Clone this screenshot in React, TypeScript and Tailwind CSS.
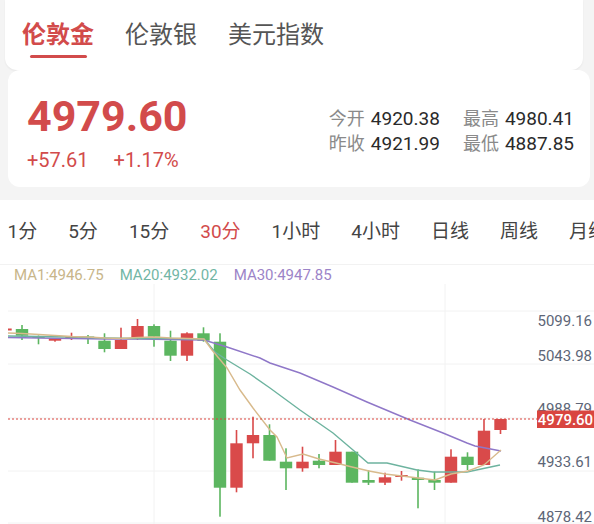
import React from 'react';

const RED = '#d94a4a';
const GREEN = '#5cb660';

// [index, color, bodyTop, bodyBottom, wickTop, wickBottom]
type Candle = [number, 'r' | 'g', number, number, number, number];

const candles: Candle[] = [
  [0, 'r', 328.5, 330.5, 328.5, 330.5],
  [1, 'g', 329, 335.7, 325, 340],
  [2, 'g', 336, 337.5, 335.5, 344.3],
  [3, 'r', 338.3, 340.7, 338.3, 341.7],
  [4, 'r', 336.7, 338.3, 332.7, 340],
  [5, 'g', 336.5, 338, 335, 344],
  [6, 'g', 340.7, 349, 333.3, 352.3],
  [7, 'r', 340, 349, 327.7, 349],
  [8, 'r', 326, 337.7, 319, 340],
  [9, 'g', 326, 336.7, 324.3, 346.7],
  [10, 'g', 340.7, 355.7, 330.7, 361],
  [11, 'r', 333.3, 355.7, 332.3, 361],
  [12, 'g', 333.3, 340.7, 327.3, 341.7],
  [13, 'g', 341.7, 487.7, 333.3, 516.7],
  [14, 'r', 443.3, 487.7, 430, 492.3],
  [15, 'r', 435, 443.3, 416.7, 458.3],
  [16, 'g', 435, 460.7, 424.3, 460.7],
  [17, 'g', 461.7, 468.3, 448.3, 490],
  [18, 'r', 461.7, 468.3, 446.7, 471.7],
  [19, 'g', 460.7, 465, 454, 468.3],
  [20, 'r', 451.7, 465, 440, 465],
  [21, 'g', 451.7, 482.7, 451.7, 482.7],
  [22, 'g', 480, 482.7, 470, 485],
  [23, 'r', 477.3, 482.7, 472.7, 485],
  [24, 'r', 475, 476.7, 471, 480.7],
  [25, 'g', 477.7, 480, 469.3, 508.3],
  [26, 'g', 480, 482.7, 471.7, 490],
  [27, 'r', 456.7, 482.7, 449.3, 482.7],
  [28, 'g', 456.7, 465, 452.3, 470],
  [29, 'r', 430.7, 465, 419, 465],
  [30, 'r', 419, 430, 419, 434],
];

const ma1 =
  '8,333 22,333.5 39,334.5 55,335.5 72,336.5 88,337 105,338 121,338.5 138,337.5 154,337 171,338 187,338.5 204,339 212,350 227,368 240,390 253,408 270,430 277,437 287,458 303,454 319,459 336,463 352,467 369,471 385,474 402,476 418,478 435,480 451,474 468,471 484,465 501,450';
const ma20 =
  '8,336 39,336.5 72,337 105,338 138,338.5 171,338.5 204,339 215,352 227,360 250,374 270,388 300,410 333,433 353,450 368,463 387,463 417,470 433,472 467,472 500,465';
const ma30 =
  '8,337.5 39,338 72,338.5 105,339 138,339 171,339.5 204,340 227,347 260,358 270,363 300,373 333,387 367,402 410,420 443,433 467,443 475,446 501,451';

const axis: [string, number][] = [
  ['5099.16', 325.5],
  ['5043.98', 360.5],
  ['4988.79', 413.5],
  ['4933.61', 467],
  ['4878.42', 522],
];

function Chart() {
  return (
    <svg width={594} height={240} viewBox="0 284 594 240" className="block">
      <defs>
        <clipPath id="plot">
          <rect x={8} y={284} width={586} height={240} />
        </clipPath>
      </defs>
      {[311, 364, 418, 471, 523].map((y) => (
        <line key={y} x1={8} x2={594} y1={y} y2={y} stroke="#f2f2f2" strokeWidth={1} />
      ))}
      {[154, 445].map((x) => (
        <line key={x} x1={x} x2={x} y1={284} y2={524} stroke="#f2f2f2" strokeWidth={1} />
      ))}
      <g clipPath="url(#plot)">
        {candles.map(([i, c, bt, bb, wt, wb]) => {
          const x = 5.5 + 16.5 * i;
          const fill = c === 'r' ? RED : GREEN;
          return (
            <g key={i}>
              <rect x={x - 0.8} y={wt} width={1.6} height={wb - wt} fill={fill} />
              <rect x={x - 6.2} y={bt} width={12.4} height={Math.max(bb - bt, 2)} fill={fill} />
            </g>
          );
        })}
        <polyline points={ma30} fill="none" stroke="#8f77c8" strokeWidth={1.4} />
        <polyline points={ma20} fill="none" stroke="#6db39f" strokeWidth={1.4} />
        <polyline points={ma1} fill="none" stroke="#d8ba8c" strokeWidth={1.4} />
      </g>
      <line x1={8} x2={537} y1={419} y2={419} stroke="#d9453f" strokeWidth={1.2} strokeDasharray="2 2" />
      {axis.map(([t, y]) => (
        <text key={t} x={592} y={y} textAnchor="end" fontSize={15} fill="#5d6677">
          {t}
        </text>
      ))}
      <rect x={537} y={410.5} width={57} height={17.5} fill="#d9453f" />
      <text x={565.5} y={424.5} textAnchor="middle" fontSize={15} fontWeight={500} fill="#ffffff">
        4979.60
      </text>
    </svg>
  );
}

const periods = ['1分', '5分', '15分', '30分', '1小时', '4小时', '日线', '周线', '月线'];

const stats: [string, string][] = [
  ['今开', '4920.38'],
  ['最高', '4980.41'],
  ['昨收', '4921.99'],
  ['最低', '4887.85'],
];

export default function App() {
  return (
    <div className="w-[594px] h-[524px] overflow-hidden bg-[#f4f4f4] font-[Roboto,'Noto_Sans_CJK_SC',sans-serif]">
      {/* market tabs */}
      <div className="ml-[5px] w-[578px] h-[70px] bg-white rounded-b-xl shadow-[0_1px_2px_rgba(0,0,0,0.06)] flex gap-[31px] pl-[17px] pt-[19px]">
        <div className="flex flex-col items-center">
          <span className="text-[24px] leading-[32px] font-bold text-[#d24b4b]">伦敦金</span>
          <span className="mt-[4px] w-[57px] h-[3px] rounded-full bg-[#d24b4b]" />
        </div>
        <span className="text-[24px] leading-[32px] text-[#555555]">伦敦银</span>
        <span className="text-[24px] leading-[32px] text-[#555555]">美元指数</span>
      </div>

      {/* quote card */}
      <div className="ml-[8px] w-[582px] h-[117px] bg-white rounded-xl flex justify-between pl-[19px] pr-[16px]">
        <div className="pt-[25px] text-[#d24b4b]">
          <div className="text-[43px] leading-none font-bold">4979.60</div>
          <div className="mt-[12px] flex gap-[25px] text-[20px] leading-none">
            <span>+57.61</span>
            <span>+1.17%</span>
          </div>
        </div>
        <div className="pt-[36px] grid grid-cols-[auto_auto] grid-rows-[25px_25px] gap-x-[23px]">
          {stats.map(([k, v]) => (
            <div key={k} className="h-[25px] flex items-center gap-[6px] leading-none">
              <span className="text-[18px] text-[#8a8a8a]">{k}</span>
              <span className="text-[19px] text-[#2a2a2a]">{v}</span>
            </div>
          ))}
        </div>
      </div>

      {/* chart */}
      <div className="mt-[13px] bg-white h-[324px]">
        <div className="h-[64px] flex items-center gap-[31px] pl-[7.5px] whitespace-nowrap text-[19px] text-[#444444]">
          {periods.map((p) => (
            <span key={p} className={p === '30分' ? 'text-[#d24b4b]' : ''}>
              {p}
            </span>
          ))}
        </div>
        <div className="border-t border-[#f2f2f2] h-[20px] flex items-center gap-[16px] pl-[14px] text-[15px] leading-[20px]">
          <span className="text-[#c8b68a]">MA1:4946.75</span>
          <span className="text-[#72b6a5]">MA20:4932.02</span>
          <span className="text-[#9c84c8]">MA30:4947.85</span>
        </div>
        <Chart />
      </div>
    </div>
  );
}
